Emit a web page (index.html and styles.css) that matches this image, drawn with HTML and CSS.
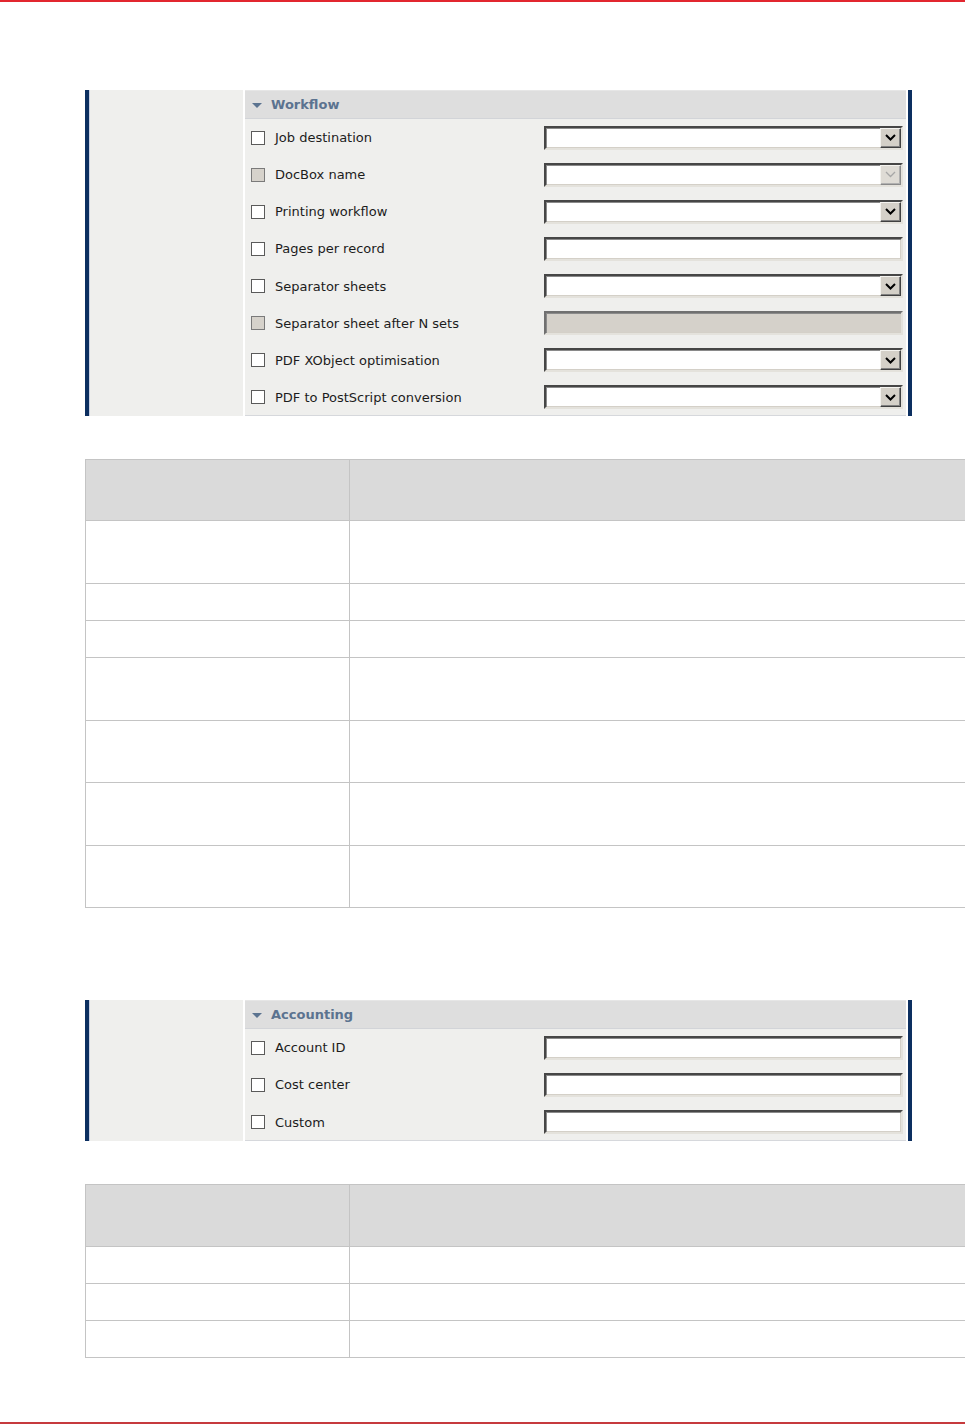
FILE: index.html
```html
<!DOCTYPE html>
<html>
<head>
<meta charset="utf-8">
<link rel="stylesheet" href="styles.css">
</head>
<body>
<div class="page">
  <section class="panel panel-workflow">
    <div class="side"></div>
    <div class="main">
      <div class="group-head"><span class="tri"></span>Workflow</div>
      <div class="row"><label class="lbl"><span class="cb"></span>Job destination</label><div class="field select"><span class="btn"><svg width="11" height="7" viewBox="0 0 11 7"><path d="M1 1 L5.5 5.5 L10 1" fill="none" stroke="#000" stroke-width="2"/></svg></span></div></div>
      <div class="row"><label class="lbl"><span class="cb dis"></span>DocBox name</label><div class="field select"><span class="btn off"><svg width="11" height="7" viewBox="0 0 11 7"><path d="M1 1 L5.5 5.5 L10 1" fill="none" stroke="#a7a7a7" stroke-width="1.3"/></svg></span></div></div>
      <div class="row"><label class="lbl"><span class="cb"></span>Printing workflow</label><div class="field select"><span class="btn"><svg width="11" height="7" viewBox="0 0 11 7"><path d="M1 1 L5.5 5.5 L10 1" fill="none" stroke="#000" stroke-width="2"/></svg></span></div></div>
      <div class="row"><label class="lbl"><span class="cb"></span>Pages per record</label><div class="field text"></div></div>
      <div class="row"><label class="lbl"><span class="cb"></span>Separator sheets</label><div class="field select"><span class="btn"><svg width="11" height="7" viewBox="0 0 11 7"><path d="M1 1 L5.5 5.5 L10 1" fill="none" stroke="#000" stroke-width="2"/></svg></span></div></div>
      <div class="row"><label class="lbl"><span class="cb dis"></span>Separator sheet after N sets</label><div class="field text disabled"></div></div>
      <div class="row"><label class="lbl"><span class="cb"></span>PDF XObject optimisation</label><div class="field select"><span class="btn"><svg width="11" height="7" viewBox="0 0 11 7"><path d="M1 1 L5.5 5.5 L10 1" fill="none" stroke="#000" stroke-width="2"/></svg></span></div></div>
      <div class="row"><label class="lbl"><span class="cb"></span>PDF to PostScript conversion</label><div class="field select"><span class="btn"><svg width="11" height="7" viewBox="0 0 11 7"><path d="M1 1 L5.5 5.5 L10 1" fill="none" stroke="#000" stroke-width="2"/></svg></span></div></div>
    </div>
  </section>

  <div class="tbl tbl-1">
    <div class="cell head"></div><div class="cell head"></div>
    <div class="cell tall"></div><div class="cell tall"></div>
    <div class="cell short"></div><div class="cell short"></div>
    <div class="cell short"></div><div class="cell short"></div>
    <div class="cell tall"></div><div class="cell tall"></div>
    <div class="cell mid"></div><div class="cell mid"></div>
    <div class="cell tall"></div><div class="cell tall"></div>
    <div class="cell mid"></div><div class="cell mid"></div>
  </div>

  <section class="panel panel-accounting">
    <div class="side"></div>
    <div class="main">
      <div class="group-head"><span class="tri"></span>Accounting</div>
      <div class="row"><label class="lbl"><span class="cb"></span>Account ID</label><div class="field text"></div></div>
      <div class="row"><label class="lbl"><span class="cb"></span>Cost center</label><div class="field text"></div></div>
      <div class="row"><label class="lbl"><span class="cb"></span>Custom</label><div class="field text"></div></div>
    </div>
  </section>

  <div class="tbl tbl-2">
    <div class="cell mid"></div><div class="cell mid"></div>
    <div class="cell short"></div><div class="cell short"></div>
    <div class="cell short"></div><div class="cell short"></div>
    <div class="cell short"></div><div class="cell short"></div>
  </div>

  <div class="foot"></div>
</div>
</body>
</html>
```

FILE: styles.css
```css
html, body {
  margin: 0;
  padding: 0;
  background: #fff;
}
body {
  font-family: "DejaVu Sans", Verdana, sans-serif;
}
.page {
  height: 1424px;
  box-sizing: border-box;
  border-top: 2px solid #e2262f;
  display: flex;
  flex-direction: column;
}
.panel {
  display: flex;
  margin-left: 85px;
  width: 827px;
  box-sizing: border-box;
  border-left: 4px solid #0c2f60;
  border-right: 4px solid #0c2f60;
  background: #fff;
}
.panel-workflow { margin-top: 88px; }
.panel-accounting { margin-top: 92px; }
.side {
  width: 153px;
  background: #efefed;
  border-left: 1px solid #c9d0e2;
}
.main {
  width: 661px;
  margin: 0 2px;
  background: #efefed;
}
.group-head {
  height: 29px;
  box-sizing: border-box;
  background: #dedede;
  border-top: 1px solid #e6e6e6;
  border-bottom: 1px solid #d2d4d8;
  display: flex;
  align-items: center;
  padding-left: 7px;
  font-size: 13px;
  font-weight: bold;
  color: #5b7390;
}
.tri {
  width: 0;
  height: 0;
  border-left: 5px solid transparent;
  border-right: 5px solid transparent;
  border-top: 5px solid #5b7390;
  margin-right: 9px;
  margin-top: 2px;
}
.row {
  height: 37.125px;
  display: flex;
  align-items: center;
  padding-left: 6px;
}
.panel-accounting .row {
  height: 37.34px;
}
.row:last-child {
  box-shadow: inset 0 -1px 0 #d6d8dc;
}
.lbl {
  width: 293px;
  display: flex;
  align-items: center;
  font-size: 13px;
  color: #1c1c1c;
}
.cb {
  width: 14px;
  height: 14px;
  box-sizing: border-box;
  border: 1px solid #5a5a5a;
  background: #fff;
  margin-right: 10px;
  flex: none;
}
.cb.dis {
  background: #d6d2cb;
  border-color: #7a7a7a;
}
.field {
  width: 359px;
  height: 24px;
  box-sizing: border-box;
  background: #fff;
  border-top: 2px solid #464646;
  border-left: 2px solid #464646;
  border-bottom: 2px solid #e4e2dc;
  border-right: 2px solid #e4e2dc;
  box-shadow: inset 1px 1px 0 #8a8a8a, inset -1px -1px 0 #d4d0c8;
  display: flex;
  justify-content: flex-end;
  align-items: center;
}
.field.disabled {
  background: #d5d1ca;
  border-top-color: #707070;
  border-left-color: #707070;
}
.btn {
  width: 21px;
  height: 20px;
  box-sizing: border-box;
  background: #d4d0c8;
  border-top: 1px solid #f4f3ef;
  border-left: 1px solid #f4f3ef;
  border-right: 1px solid #404040;
  border-bottom: 1px solid #404040;
  box-shadow: inset -1px -1px 0 #808080;
  display: flex;
  align-items: center;
  justify-content: center;
}
.btn.off {
  background: #dedbd5;
  border-right-color: #8a8a8a;
  border-bottom-color: #8a8a8a;
  box-shadow: inset -1px -1px 0 #b0b0b0;
}
.tbl {
  display: grid;
  grid-template-columns: 264px 616px;
  margin-left: 85px;
  margin-top: 43px;
  border-top: 1px solid #c4c4c4;
  border-left: 1px solid #c4c4c4;
  width: 880px;
  box-sizing: border-box;
}
.cell {
  box-sizing: border-box;
  border-right: 1px solid #c4c4c4;
  border-bottom: 1px solid #c4c4c4;
}
.cell.head { height: 61px; background: #dadada; }
.tbl-2 .cell:nth-child(-n+2) { background: #dadada; }
.cell.tall { height: 63px; }
.cell.mid { height: 62px; }
.cell.short { height: 37px; }
.foot {
  margin-top: auto;
  border-bottom: 2px solid #c63a3d;
}
```
